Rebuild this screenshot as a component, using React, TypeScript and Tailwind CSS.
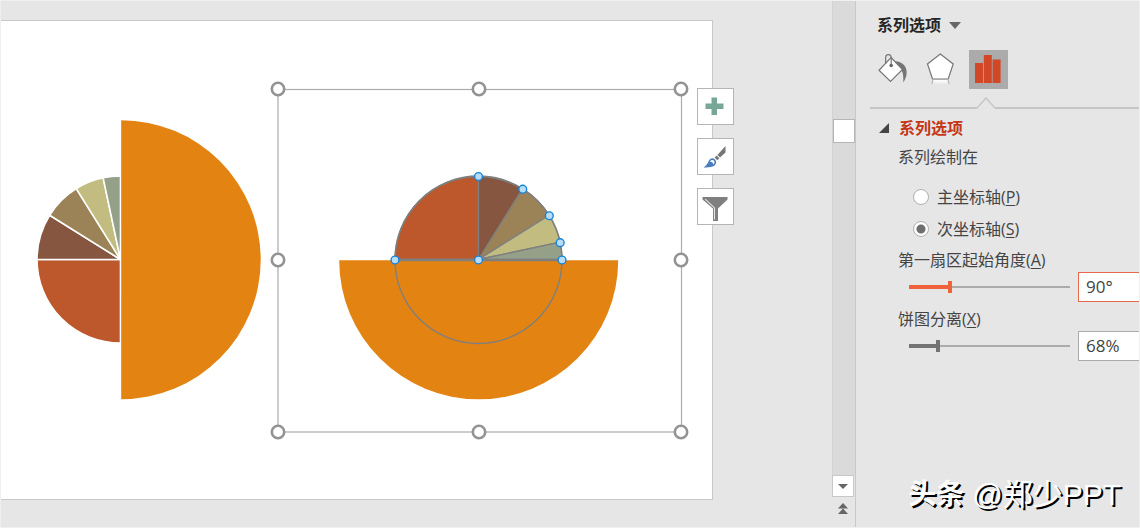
import { useState } from "react";
import type { ReactNode } from "react";

type Slice = { from: number; to: number; color: string };

// Degrees, clockwise from twelve o'clock
const slices: Slice[] = [
  { from: 270, to: 360, color: "#bc582b" },
  { from: 0, to: 32, color: "#865640" },
  { from: 32, to: 58, color: "#9b8357" },
  { from: 58, to: 78, color: "#c2bc80" },
  { from: 78, to: 90, color: "#94a088" },
];

const selectionHandles = [
  [278, 89],
  [479, 89],
  [681, 89],
  [278, 260],
  [681, 260],
  [278, 432],
  [479, 432],
  [681, 432],
];

function point(cx: number, cy: number, r: number, deg: number) {
  const rad = ((deg - 90) * Math.PI) / 180;
  return [cx + r * Math.cos(rad), cy + r * Math.sin(rad)];
}

function wedge(cx: number, cy: number, r: number, from: number, to: number) {
  const [x1, y1] = point(cx, cy, r, from);
  const [x2, y2] = point(cx, cy, r, to);
  return `M${cx} ${cy}L${x1} ${y1}A${r} ${r} 0 0 1 ${x2} ${y2}Z`;
}

function Charts() {
  const points = [270, 0, 32, 58, 78, 90].map((d) => point(478.5, 260, 83.5, d));

  return (
    <svg viewBox="1 21 711 478" className="block w-full">
      {/* Left chart */}
      {slices.map((s) => (
        <path
          key={s.color}
          d={wedge(120.5, 259.5, 83.5, s.from - 90, s.to - 90)}
          fill={s.color}
          stroke="#fff"
          strokeWidth="1.6"
          strokeLinejoin="round"
        />
      ))}
      <path d="M121.2 120.2A139.5 139.5 0 0 1 121.2 399.2Z" fill="#e38312" />

      {/* Selected chart */}
      <path d="M339.2 260.3A139.5 139 0 0 0 618.2 260.3Z" fill="#e38312" />
      {slices.map((s) => (
        <path
          key={s.color}
          d={wedge(478.5, 259.5, 83.5, s.from, s.to)}
          fill={s.color}
          stroke="#7f7f7f"
          strokeWidth="1.3"
          strokeLinejoin="round"
        />
      ))}
      <circle cx="478.5" cy="260" r="83.5" fill="none" stroke="#7f7f7f" strokeWidth="1.4" />
      <path d="M395 260H562" stroke="#7f7f7f" strokeWidth="2.4" />
      {[...points, [478.5, 260]].map(([x, y]) => (
        <circle key={`${x}-${y}`} cx={x} cy={y} r="3.9" fill="#b9dcf5" stroke="#1583d8" strokeWidth="1.4" />
      ))}

      <rect x="278" y="89.5" width="403.5" height="342.5" fill="none" stroke="#ababab" strokeWidth="1.2" />
      {selectionHandles.map(([x, y]) => (
        <circle key={`${x}-${y}`} cx={x} cy={y} r="6.2" fill="#fff" stroke="#939393" strokeWidth="2.6" />
      ))}
    </svg>
  );
}

function ChartButton({ label, children }: { label: string; children: ReactNode }) {
  return (
    <button
      type="button"
      aria-label={label}
      className="flex size-[37px] items-center justify-center border border-[#b5b5b5] bg-white"
    >
      {children}
    </button>
  );
}

function ChartButtons() {
  return (
    <div className="absolute top-[67px] -right-[22px] flex flex-col gap-[13px]">
      <ChartButton label="图表元素">
        <svg viewBox="0 0 35 35" className="size-[35px]">
          <path d="M13.500 8.500h5.500v6h6.500v5.500H19v6h-5.500v-6H7.500v-5.500h6z" fill="#76a797" />
        </svg>
      </ChartButton>
      <ChartButton label="图表样式">
        <svg viewBox="0 0 35 35" className="size-[35px]">
          <path d="M27.5 7v6.5L22 18.5l-2.6-2.6z" fill="#767676" />
          <path d="M18.6 16.6l2.7 2.7-2 2-2.7-2.7z" fill="#767676" />
          <path
            d="M11 21.5c1.5-2.4 4-2.8 5.8-1.2 1.9 1.8 1.7 4.8-.3 6.2-2.6 2.2-7 1.9-11 1.9 2.4-.9 4-3.9 5.5-6.9z"
            fill="#4a7ebb"
          />
          <path d="M11.8 22.6c1.1-1.9 2.9-2.1 4-1.1 1.1 1.1.9 3-.4 3.9-.3-1.7-1.6-2.800-3.600-2.800z" fill="#fff" />
        </svg>
      </ChartButton>
      <ChartButton label="图表筛选器">
        <svg viewBox="0 0 35 35" className="size-[35px]">
          <path d="M4.500 8h25v2.500L20 19.500V32h-5V19.500L4.500 10.500z" fill="#7f7f7f" />
          <path d="M7.200 10.200l9.300 8.700v11.500" fill="none" stroke="#e4e4e4" strokeWidth="1.1" />
        </svg>
      </ChartButton>
    </div>
  );
}

function ScrollBar() {
  return (
    <div className="flex w-[23px] shrink-0 flex-col items-start">
      <div className="w-full flex-1 border-l border-[#d2d2d2] bg-[#dadada] pt-[118px]">
        <div className="h-6 w-[22px] border border-[#b5b5b5] bg-white" />
      </div>
      <button
        type="button"
        aria-label="向下滚动"
        className="flex h-[22px] w-[22px] items-center justify-center border border-[#c8c8c8] bg-white"
      >
        <svg viewBox="0 0 10 5" className="h-[5px] w-[10px]">
          <path d="M0 0h10L5 5z" fill="#666" />
        </svg>
      </button>
      <button type="button" aria-label="上一张幻灯片" className="flex h-[30px] w-[22px] justify-center pt-[6px]">
        <svg viewBox="0 0 10 12" className="h-3 w-[10px]">
          <path d="M5 0l5 5.500H0zM5 5.500l5 5.500H0z" fill="#666" />
        </svg>
      </button>
    </div>
  );
}

function PanelTabs() {
  return (
    <div className="mt-[13px] flex gap-[9px] pl-[17px]">
      <button type="button" aria-label="填充与线条" className="size-[39px]">
        <svg viewBox="0 0 39 39" className="size-[39px]">
          <path d="M22 11c6.500.8 11 4 11.600 10 .3 3.500-.5 7-3.200 11.500-.2-5 .3-9.500-2.400-12.500z" fill="#757575" />
          <path d="M18 7.500L29.500 19.500 17.500 31.500 6 20.300z" fill="#fff" stroke="#757575" strokeWidth="1.2" />
          <path d="M12.600 14V8c0-4.400 5.600-4.400 5.600 0v7" fill="none" stroke="#757575" strokeWidth="1.2" />
          <circle cx="18.200" cy="15.500" r="1.800" fill="#666" />
        </svg>
      </button>
      <button type="button" aria-label="效果" className="size-[39px]">
        <svg viewBox="0 0 39 39" className="size-[39px]">
          <defs>
            <linearGradient id="reflection" x1="0" y1="0" x2="0" y2="1">
              <stop offset="0" stopColor="#fff" />
              <stop offset="1" stopColor="#e6e6e6" />
            </linearGradient>
          </defs>
          <path d="M12 30h15l1.500 4.500h-18z" fill="url(#reflection)" />
          <path d="M12 30l-1.200 4M27 30l1.200 4" stroke="#aaa" strokeWidth="1" />
          <path d="M19.300 4L32.200 14 27.200 29H11.500L6.500 14z" fill="#fff" stroke="#757575" strokeWidth="1.2" />
        </svg>
      </button>
      <button type="button" aria-label="系列选项" className="size-[39px] bg-[#ababab]">
        <svg viewBox="0 0 39 39" className="size-[39px]">
          <path d="M6 13h8v20H6zM14.800 5h8v28h-8zM23.600 9.500h8V33h-8z" fill="#d24726" />
        </svg>
      </button>
    </div>
  );
}

function Radio({ id, label, hotkey, checked, onChange }: {
  id: string;
  label: string;
  hotkey: string;
  checked: boolean;
  onChange: () => void;
}) {
  return (
    <div className="flex items-center gap-2">
      <input
        id={id}
        type="radio"
        name="axis"
        checked={checked}
        onChange={onChange}
        className="size-4 appearance-none rounded-full border border-[#b0b0b0] bg-white checked:bg-[radial-gradient(circle,#6e6e6e_4px,#fff_5px)]"
      />
      <label htmlFor={id}>
        {label}(<u className="underline-offset-2">{hotkey}</u>)
      </label>
    </div>
  );
}

function SliderField({ id, label, hotkey, max, unit, value, onChange, active }: {
  id: string;
  label: string;
  hotkey: string;
  max: number;
  unit: string;
  value: number;
  onChange: (value: number) => void;
  active?: boolean;
}) {
  return (
    <div>
      <label htmlFor={id} className="block pl-[42px]">
        {label}(<u className="underline-offset-2">{hotkey}</u>)
      </label>
      <div className="flex items-center gap-2 pl-[53px]">
        <div className="relative flex h-3 flex-1 items-center">
          <div className="h-[2px] w-full bg-[#ababab]" />
          <div
            className={`absolute left-0 h-1 ${active ? "bg-[#f0633a]" : "bg-[#737373]"}`}
            style={{ width: `${(value / max) * 100}%` }}
          />
          <input
            id={id}
            type="range"
            min={0}
            max={max}
            value={value}
            onChange={(e) => onChange(Number(e.target.value))}
            className={`absolute inset-0 h-3 w-full appearance-none bg-transparent [&::-webkit-slider-thumb]:h-3 [&::-webkit-slider-thumb]:w-1 [&::-webkit-slider-thumb]:appearance-none ${
              active
                ? "[&::-webkit-slider-thumb]:bg-[#f0633a]"
                : "[&::-webkit-slider-thumb]:bg-[#737373]"
            }`}
          />
        </div>
        <input
          type="text"
          aria-label={label}
          value={`${value}${unit}`}
          onChange={(e) => onChange(Math.min(max, parseInt(e.target.value) || 0))}
          className={`h-[30px] w-[61px] border border-r-0 bg-white pb-[2px] pl-[7px] text-[17px] text-[#444] outline-none ${
            active ? "border-[#e8694a]" : "border-[#ababab]"
          }`}
        />
      </div>
    </div>
  );
}

export default function App() {
  const [axis, setAxis] = useState("secondary");
  const [angle, setAngle] = useState(90);
  const [explosion, setExplosion] = useState(68);

  return (
    <div className="flex min-h-screen border border-[#f0f0f0] bg-[#e6e6e6] font-['Open_Sans','Noto_Sans_CJK_SC',sans-serif] text-base leading-6 text-[#444]">
      <main className="min-w-0 flex-1 pt-[19px] pr-[119px]">
        <div className="relative border-y border-r border-[#c8c8c8] bg-white">
          <Charts />
          <ChartButtons />
        </div>
      </main>

      <ScrollBar />

      <aside className="flex w-[284px] shrink-0 flex-col border-l border-[#c8c8c8] pt-3">
        <button type="button" className="flex items-center gap-2 pl-[21px] font-bold text-[#262626]">
          系列选项
          <svg viewBox="0 0 12 7" className="h-[7px] w-3">
            <path d="M0 0h12L6 7z" fill="#666" />
          </svg>
        </button>

        <PanelTabs />

        {/* Divider pointing at the open tab */}
        <div className="mt-2 ml-[14px] flex items-end">
          <div className="h-[2px] w-[107px] bg-[#c6c6c6]" />
          <svg viewBox="0 0 18 12" className="h-3 w-[18px]">
            <path d="M0 11L9 1l9 10" fill="none" stroke="#c6c6c6" strokeWidth="1.5" />
          </svg>
          <div className="h-[2px] flex-1 bg-[#c6c6c6]" />
        </div>

        <button type="button" className="mt-[7px] flex items-center gap-[10px] pl-[23px] font-bold text-[#c43616]">
          <svg viewBox="0 0 10 10" className="size-[10px]">
            <path d="M10 0v10H0z" fill="#444" />
          </svg>
          系列选项
        </button>

        <fieldset className="mt-[5px]">
          <legend className="pl-[42px]">系列绘制在</legend>
          <div className="mt-4 flex flex-col gap-2 pl-[57px]">
            <Radio
              id="axis-primary"
              label="主坐标轴"
              hotkey="P"
              checked={axis === "primary"}
              onChange={() => setAxis("primary")}
            />
            <Radio
              id="axis-secondary"
              label="次坐标轴"
              hotkey="S"
              checked={axis === "secondary"}
              onChange={() => setAxis("secondary")}
            />
          </div>
        </fieldset>

        <div className="mt-[7px] flex flex-col gap-[5px]">
          <SliderField
            id="angle"
            label="第一扇区起始角度"
            hotkey="A"
            max={360}
            unit="°"
            value={angle}
            onChange={setAngle}
            active
          />
          <SliderField
            id="explosion"
            label="饼图分离"
            hotkey="X"
            max={400}
            unit="%"
            value={explosion}
            onChange={setExplosion}
          />
        </div>

        <div className="mt-auto flex items-center justify-end gap-2 pr-[18px] pb-3 font-['Liberation_Sans','Noto_Sans_CJK_SC',sans-serif] leading-10 whitespace-nowrap text-white [text-shadow:2px_2px_0_#000]">
          <span className="text-[28px] font-bold">头条</span>
          <span className="text-[30px]">@郑少PPT</span>
        </div>
      </aside>
    </div>
  );
}
